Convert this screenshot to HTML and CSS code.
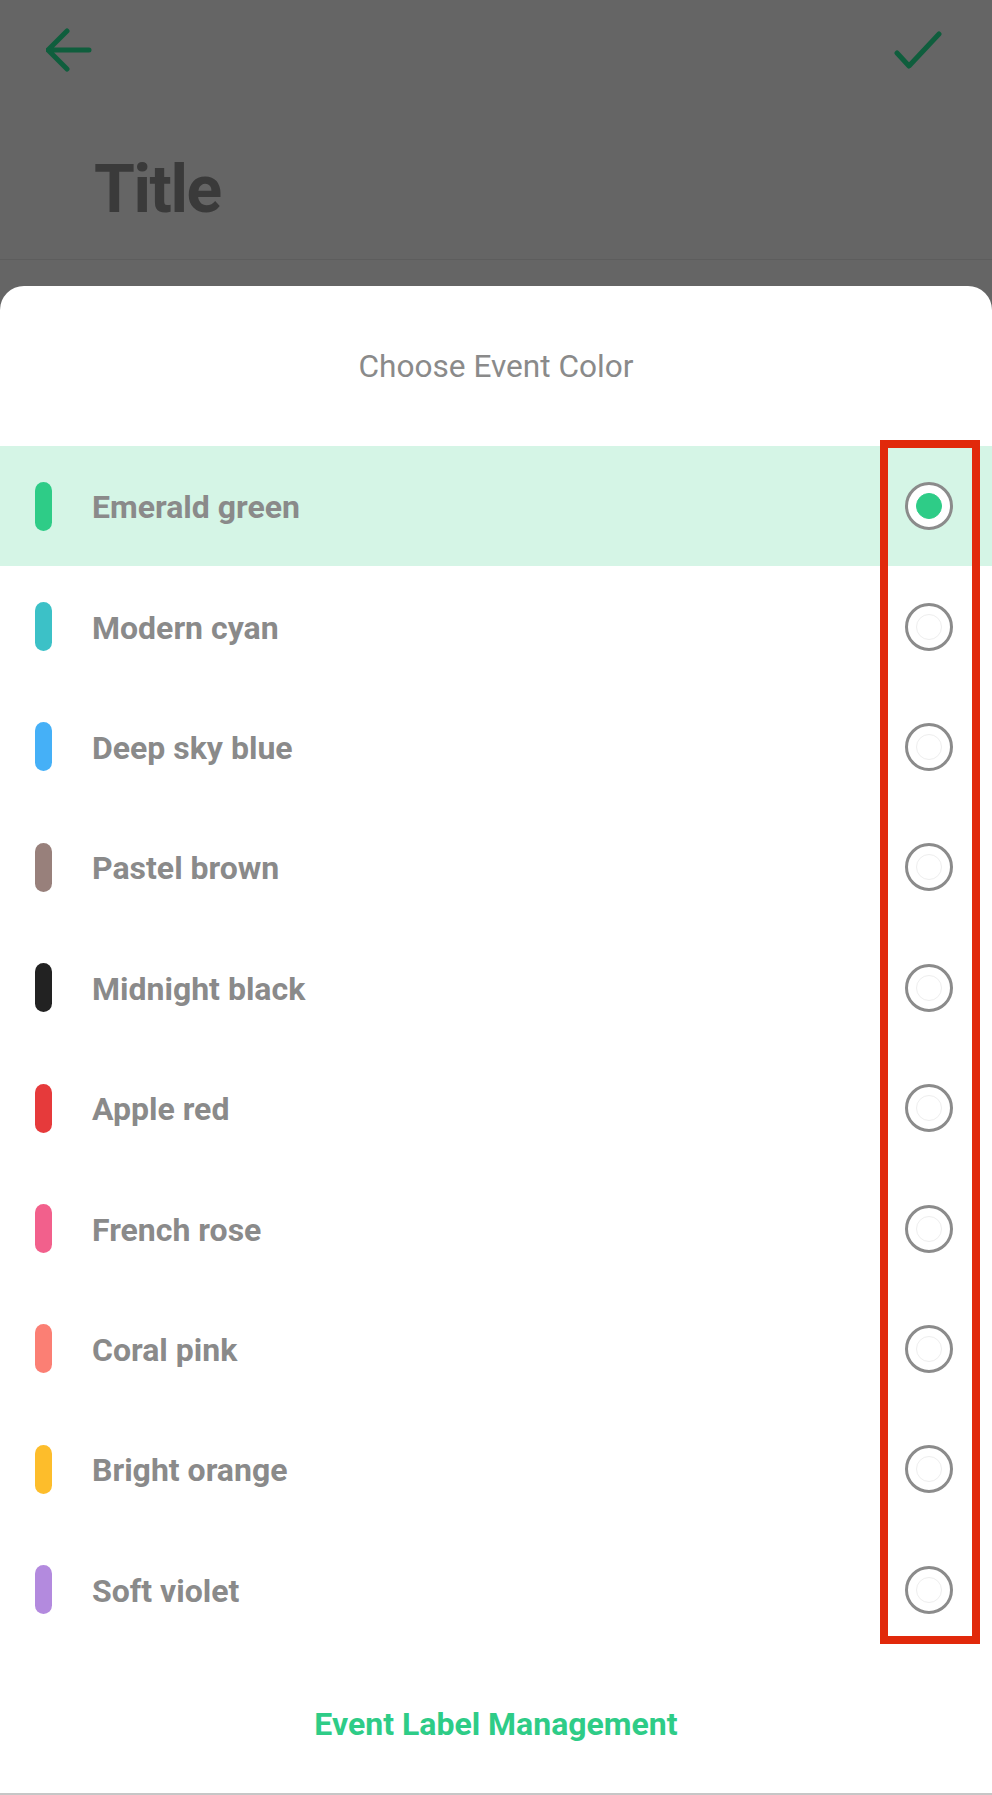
FILE: index.html
```html
<!DOCTYPE html>
<html>
<head>
<meta charset="utf-8">
<link rel="stylesheet" href="styles.css">
</head>
<body>
<div class="screen">
  <header class="page-header">
    <div class="topbar">
      <svg class="icon-back" width="46" height="46" viewBox="0 0 46 46"><path d="M2 22 H43 M21 3 L2 22 L21 41" fill="none" stroke="#0f5e3d" stroke-width="5" stroke-linecap="round" stroke-linejoin="round"/></svg>
      <svg class="icon-check" width="50" height="40" viewBox="0 0 50 40"><path d="M3 23 L15 36 L45 4" fill="none" stroke="#0f5e3d" stroke-width="5" stroke-linecap="round" stroke-linejoin="round"/></svg>
    </div>
    <h1 class="page-title">Title</h1>
  </header>
  <div class="gap"></div>
  <section class="sheet">
    <div class="sheet-title">Choose Event Color</div>
    <ul class="color-list">
      <li class="row selected"><span class="bar" style="background:#2ecc87"></span><span class="label">Emerald green</span><span class="radio on"></span></li>
      <li class="row"><span class="bar" style="background:#3cc1c7"></span><span class="label">Modern cyan</span><span class="radio"></span></li>
      <li class="row"><span class="bar" style="background:#45b0f7"></span><span class="label">Deep sky blue</span><span class="radio"></span></li>
      <li class="row"><span class="bar" style="background:#98807b"></span><span class="label">Pastel brown</span><span class="radio"></span></li>
      <li class="row"><span class="bar" style="background:#222222"></span><span class="label">Midnight black</span><span class="radio"></span></li>
      <li class="row"><span class="bar" style="background:#e63a3b"></span><span class="label">Apple red</span><span class="radio"></span></li>
      <li class="row"><span class="bar" style="background:#f2608c"></span><span class="label">French rose</span><span class="radio"></span></li>
      <li class="row"><span class="bar" style="background:#fb7f74"></span><span class="label">Coral pink</span><span class="radio"></span></li>
      <li class="row"><span class="bar" style="background:#fdbd2b"></span><span class="label">Bright orange</span><span class="radio"></span></li>
      <li class="row"><span class="bar" style="background:#b38ade"></span><span class="label">Soft violet</span><span class="radio"></span></li>
    </ul>
    <div class="sheet-footer">Event Label Management</div>
    <div class="highlight-box"></div>
  </section>
</div>
</body>
</html>
```

FILE: styles.css
```css
* { box-sizing: border-box; }
html, body { margin: 0; padding: 0; }
body {
  width: 992px;
  height: 1795px;
  background: #656565;
  font-family: Roboto, "Liberation Sans", sans-serif;
  overflow: hidden;
}
.screen {
  display: flex;
  flex-direction: column;
  height: 1795px;
}
.page-header {
  height: 260px;
  border-bottom: 1px solid #5d5d5d;
  background: #656565;
}
.topbar {
  height: 102px;
  display: flex;
  justify-content: space-between;
  align-items: flex-start;
  padding: 28px 48px 0 46px;
}
.icon-check { margin-top: 2px; }
.page-title {
  margin: 55px 0 0 94px;
  font-size: 66px;
  line-height: 66px;
  font-weight: 700;
  color: #3a3a3a;
  letter-spacing: -1.4px;
}
.gap { height: 26px; }
.sheet {
  position: relative;
  flex: 1;
  background: #ffffff;
  border-radius: 24px 24px 0 0;
  display: flex;
  flex-direction: column;
  border-bottom: 2px solid #c6c6c6;
}
.sheet-title {
  padding: 61px 0 59px;
  height: 160px;
  text-align: center;
  font-size: 31.6px;
  line-height: 40px;
  color: #8a8a8a;
}
.color-list {
  list-style: none;
  margin: 0;
  padding: 0;
}
.row {
  height: 120.4px;
  display: flex;
  align-items: center;
  padding: 0 39px 0 35px;
}
.row.selected { background: #d5f5e6; }
.bar {
  width: 17px;
  height: 49px;
  border-radius: 9px;
  flex: none;
}
.label {
  flex: 1;
  margin-left: 40px;
  padding-top: 2px;
  font-size: 32px;
  font-weight: 700;
  color: #8a8a8a;
  line-height: 40px;
}
.radio {
  width: 48px;
  height: 48px;
  border-radius: 50%;
  border: 3px solid #8b8b8b;
  background: #ffffff;
  display: flex;
  align-items: center;
  justify-content: center;
  flex: none;
}
.radio::after {
  content: "";
  width: 24px;
  height: 24px;
  border-radius: 50%;
  border: 1px solid #eeeeee;
}
.radio.on::after {
  background: #2ecc87;
  border-color: #2ecc87;
}
.sheet-footer {
  padding: 54px 0 49px;
  text-align: center;
  font-size: 32px;
  line-height: 40px;
  font-weight: 700;
  color: #2ecc87;
}
.highlight-box {
  position: absolute;
  left: 880px;
  top: 154px;
  width: 100px;
  height: 1204px;
  border: 8px solid #e1290b;
}
```
